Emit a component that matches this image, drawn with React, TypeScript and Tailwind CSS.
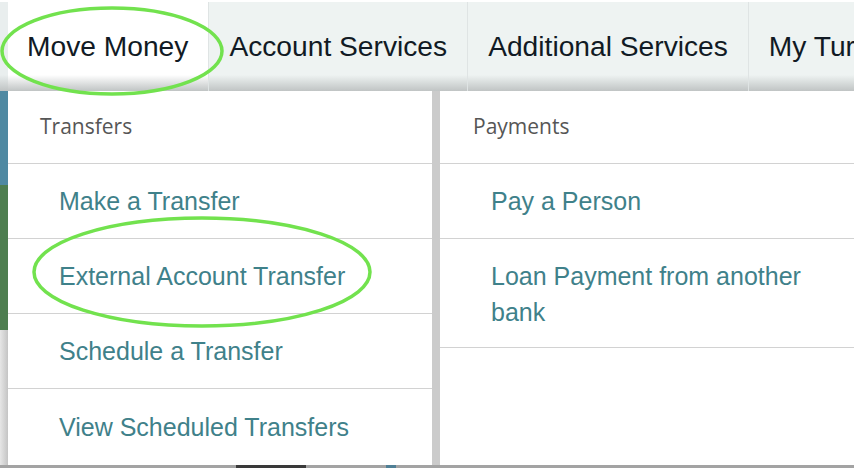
import React from 'react';

const navTabs = ['Move Money', 'Account Services', 'Additional Services', 'My Turn'];

const transfers = ['Make a Transfer', 'External Account Transfer', 'Schedule a Transfer', 'View Scheduled Transfers'];

export default function App() {
  return (
    <div className="relative w-[854px] h-[468px] overflow-hidden bg-white font-['Liberation_Sans',Arial,sans-serif]">
      {/* Top nav */}
      <div className="flex h-[91px] pt-[2px] bg-white">
        <div className="w-[8px] shrink-0 bg-[linear-gradient(to_bottom,#e9eeee_0%,#e9eeee_82%,#bfc3c3_100%)]" />
        {navTabs.map((tab, i) => (
          <div
            key={tab}
            className={`flex items-center px-[20px] shrink-0 whitespace-nowrap text-[28.2px] text-[#111a24] ${
              i === 0
                ? 'bg-[linear-gradient(to_bottom,#ffffff_0%,#ffffff_82%,#c0c4c4_100%)] pl-[19px]'
                : 'border-l border-[#dfe4e4] bg-[linear-gradient(to_bottom,#eef3f2_0%,#eef3f2_82%,#c0c4c4_100%)]'
            }`}
          >
            {tab}
          </div>
        ))}
      </div>

      {/* Dropdown area */}
      <div className="flex h-[374px]">
        <div className="flex flex-col w-[8px] shrink-0">
          <div className="h-[94px] bg-[#4f89a2]" />
          <div className="h-[145px] bg-[#4e7e50]" />
          <div className="flex-1 bg-[linear-gradient(to_right,#e6e6e6,#c4c4c4)]" />
        </div>

        <div className="flex flex-col w-[424px] shrink-0">
          <div className="flex items-center h-[73px] pl-[32px] border-b border-[#d2d2d2] font-['Open_Sans',sans-serif] text-[21px] text-[#565656]">
            Transfers
          </div>
          {transfers.map((t, i) => (
            <div
              key={t}
              className={`flex items-center h-[75px] pl-[51px] pt-[2px] text-[25px] text-[#3f818a] ${
                i < transfers.length - 1 ? 'border-b border-[#d2d2d2]' : ''
              }`}
            >
              {t}
            </div>
          ))}
        </div>

        <div className="w-[8px] shrink-0 bg-[#cbcbcb]" />

        <div className="flex flex-col flex-1">
          <div className="flex items-center h-[73px] pl-[33px] border-b border-[#d2d2d2] font-['Open_Sans',sans-serif] text-[21px] text-[#565656]">
            Payments
          </div>
          <div className="flex items-center h-[75px] pl-[51px] pt-[2px] border-b border-[#d2d2d2] text-[25px] text-[#3f818a]">
            Pay a Person
          </div>
          <div className="flex items-center h-[109px] pl-[51px] pr-[30px] pt-[2px] border-b border-[#d2d2d2] text-[25px] leading-[36px] text-[#3f818a]">
            Loan Payment from another bank
          </div>
        </div>
      </div>

      {/* Page behind, peeking out at the bottom */}
      <div className="flex h-[3px] bg-[#a3a3a3]">
        <div className="ml-[236px] w-[70px] bg-[#3a3a3a]" />
        <div className="ml-[80px] w-[10px] bg-[#4f7f95]" />
      </div>

      {/* Highlight circles */}
      <svg className="absolute left-0 top-0 pointer-events-none" width="854" height="468">
        <ellipse cx="112" cy="51" rx="110" ry="43" fill="none" stroke="#72e24e" strokeWidth="3.5" />
        <ellipse cx="202" cy="272" rx="168" ry="54" fill="none" stroke="#72e24e" strokeWidth="3.5" />
      </svg>
    </div>
  );
}
